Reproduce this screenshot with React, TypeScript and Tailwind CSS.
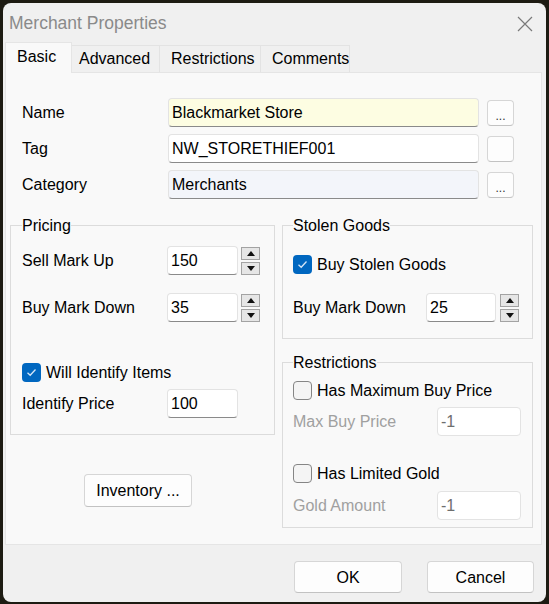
import React from 'react';

// Win32-style "Merchant Properties" dialog

const TextBox = ({ value, className = '', disabled = false }: { value: string; className?: string; disabled?: boolean }) => (
    <div
        className={`h-[29px] shrink-0 flex items-center pl-[3px] rounded-[4px] border whitespace-nowrap ${
            disabled ? 'border-[#e3e3e3] bg-white text-[#6e6e6e]' : 'border-[#e3e3e3] border-b-[#8a8a8a] text-black'
        } ${className}`}
    >
        {value}
    </div>
);

const Spinner = ({ className = '' }: { className?: string }) => (
    <div className={`flex flex-col gap-[2px] ${className}`}>
        <div className="w-[19px] h-[13px] border border-[#a3a3a3] bg-[#e6e6e6] flex items-center justify-center">
            <svg width="8" height="5" viewBox="0 0 8 5">
                <path d="M4 0 L8 5 L0 5 Z" fill="#111" />
            </svg>
        </div>
        <div className="w-[19px] h-[13px] border border-[#a3a3a3] bg-[#e6e6e6] flex items-center justify-center">
            <svg width="8" height="5" viewBox="0 0 8 5">
                <path d="M0 0 L8 0 L4 5 Z" fill="#111" />
            </svg>
        </div>
    </div>
);

const CheckBox = ({ checked }: { checked: boolean }) =>
    checked ? (
        <div className="w-[19px] h-[19px] rounded-[4px] bg-[#0067c0] flex items-center justify-center shrink-0">
            <svg width="11" height="9" viewBox="0 0 11 9">
                <path d="M1.5 4.8 L4.2 7.3 L9.5 1.5" stroke="#d4e6f7" strokeWidth="1.3" fill="none" />
            </svg>
        </div>
    ) : (
        <div className="w-[19px] h-[19px] rounded-[4px] border border-[#858585] bg-[#f4f4f4] shrink-0" />
    );

const CheckRow = ({ checked, label, className = '' }: { checked: boolean; label: string; className?: string }) => (
    <div className={`flex items-center h-[19px] ${className}`}>
        <CheckBox checked={checked} />
        <span className="ml-[5px] whitespace-nowrap">{label}</span>
    </div>
);

const PushButton = ({ label, className = '' }: { label: string; className?: string }) => (
    <div
        className={`flex items-center justify-center rounded-[4px] border border-[#d6d6d6] border-b-[#c2c2c2] bg-[#fdfdfd] text-black ${className}`}
    >
        {label}
    </div>
);

const DotsButton = ({ dots = true }: { dots?: boolean }) => (
    <div className="ml-[8px] w-[27px] h-[26px] rounded-[4px] border border-[#d6d6d6] border-b-[#c2c2c2] bg-[#fdfdfd] flex items-end justify-center pb-[3px] text-[12px] leading-[12px] text-[#333]">
        {dots ? '...' : ''}
    </div>
);

const Legend = ({ text }: { text: string }) => (
    <div className="-mt-[10px] h-[20px] leading-[20px] w-fit bg-[#f9f9f9] text-black">{text}</div>
);

export default function App() {
    return (
        <div className="w-[549px] h-[604px] bg-[#1d1b12] pt-[3px] pl-[3px] font-['Liberation_Sans',Arial,sans-serif] text-[16px] leading-[20px] text-black">
            <div className="w-[543px] h-[599px] rounded-[8px] bg-[#f0f0f0] flex flex-col overflow-hidden">
                {/* title bar */}
                <div className="h-[39px] flex items-center justify-between pl-[6px] pr-[13px] shrink-0">
                    <span className="text-[17.5px] text-[#8a8a8a]">Merchant Properties</span>
                    <svg width="16" height="16" viewBox="0 0 16 16" className="mt-[3px]">
                        <path d="M1 1 L15 15 M15 1 L1 15" stroke="#7a7a7a" strokeWidth="1.2" />
                    </svg>
                </div>

                {/* tabs */}
                <div className="flex items-end h-[30px] ml-[2px] shrink-0">
                    <div className="relative z-10 -mb-px h-[31px] w-[67px] bg-[#f9f9f9] border border-b-0 border-[#e5e5e5] pl-[11px] pt-[4px]">
                        Basic
                    </div>
                    <div className="h-[27px] w-[88px] bg-[#f0f0f0] border-t border-r border-[#e3e3e3] pl-[7px] pt-[3px]">
                        Advanced
                    </div>
                    <div className="h-[27px] w-[101px] bg-[#f0f0f0] border-t border-r border-[#e3e3e3] pl-[11px] pt-[3px]">
                        Restrictions
                    </div>
                    <div className="h-[27px] w-[89px] bg-[#f0f0f0] border-t border-r border-[#e3e3e3] pl-[11px] pt-[3px]">
                        Comments
                    </div>
                </div>

                {/* tab page */}
                <div className="ml-[2px] w-[537px] h-[473px] shrink-0 border border-[#e5e5e5] bg-[#f9f9f9]">
                    <div className="pt-[25px] pl-[16px] flex flex-col gap-[7px]">
                        <div className="flex items-center">
                            <span className="w-[146px]">Name</span>
                            <TextBox value="Blackmarket Store" className="w-[311px] bg-[#fdfde2]" />
                            <DotsButton />
                        </div>
                        <div className="flex items-center">
                            <span className="w-[146px]">Tag</span>
                            <TextBox value="NW_STORETHIEF001" className="w-[311px] bg-white" />
                            <DotsButton dots={false} />
                        </div>
                        <div className="flex items-center">
                            <span className="w-[146px]">Category</span>
                            <TextBox value="Merchants" className="w-[311px] bg-[#f3f5fa]" />
                            <DotsButton />
                        </div>
                    </div>

                    <div className="mt-[26px] pl-[4px] flex gap-[7px] items-start">
                        {/* left column */}
                        <div className="w-[265px] flex flex-col">
                            <div className="border border-[#dcdcdc] pl-[11px] pb-[16px]">
                                <Legend text="Pricing" />
                                <div className="flex items-center mt-[10px]">
                                    <span className="w-[145px]">Sell Mark Up</span>
                                    <TextBox value="150" className="w-[71px] bg-white" />
                                    <Spinner className="ml-[3px]" />
                                </div>
                                <div className="flex items-center mt-[18px]">
                                    <span className="w-[145px]">Buy Mark Down</span>
                                    <TextBox value="35" className="w-[71px] bg-white" />
                                    <Spinner className="ml-[3px]" />
                                </div>
                                <CheckRow checked label="Will Identify Items" className="mt-[41px]" />
                                <div className="flex items-center mt-[7px]">
                                    <span className="w-[145px]">Identify Price</span>
                                    <TextBox value="100" className="w-[71px] bg-white" />
                                </div>
                            </div>
                            <PushButton label="Inventory ..." className="mt-[39px] ml-[74px] w-[108px] h-[33px] pt-[1px]" />
                        </div>

                        {/* right column */}
                        <div className="w-[251px] flex flex-col">
                            <div className="border border-[#dcdcdc] pl-[10px] pb-[16px]">
                                <Legend text="Stolen Goods" />
                                <CheckRow checked label="Buy Stolen Goods" className="mt-[19px]" />
                                <div className="flex items-center mt-[19px]">
                                    <span className="w-[133px]">Buy Mark Down</span>
                                    <TextBox value="25" className="w-[70px] bg-white" />
                                    <Spinner className="ml-[4px]" />
                                </div>
                            </div>
                            <div className="mt-[23px] border border-[#dcdcdc] pl-[10px] pb-[7px]">
                                <Legend text="Restrictions" />
                                <CheckRow checked={false} label="Has Maximum Buy Price" className="mt-[8px]" />
                                <div className="flex items-center mt-[7px]">
                                    <span className="w-[144px] text-[#a0a0a0]">Max Buy Price</span>
                                    <TextBox value="-1" disabled className="w-[84px]" />
                                </div>
                                <CheckRow checked={false} label="Has Limited Gold" className="mt-[28px]" />
                                <div className="flex items-center mt-[8px]">
                                    <span className="w-[144px] text-[#a0a0a0]">Gold Amount</span>
                                    <TextBox value="-1" disabled className="w-[84px]" />
                                </div>
                            </div>
                        </div>
                    </div>
                </div>

                {/* dialog buttons */}
                <div className="flex-1 flex justify-end items-start pt-[16px] pr-[12px] gap-[25px]">
                    <PushButton label="OK" className="w-[108px] h-[32px] pt-[1px]" />
                    <PushButton label="Cancel" className="w-[107px] h-[32px] pt-[1px]" />
                </div>
            </div>
        </div>
    );
}
